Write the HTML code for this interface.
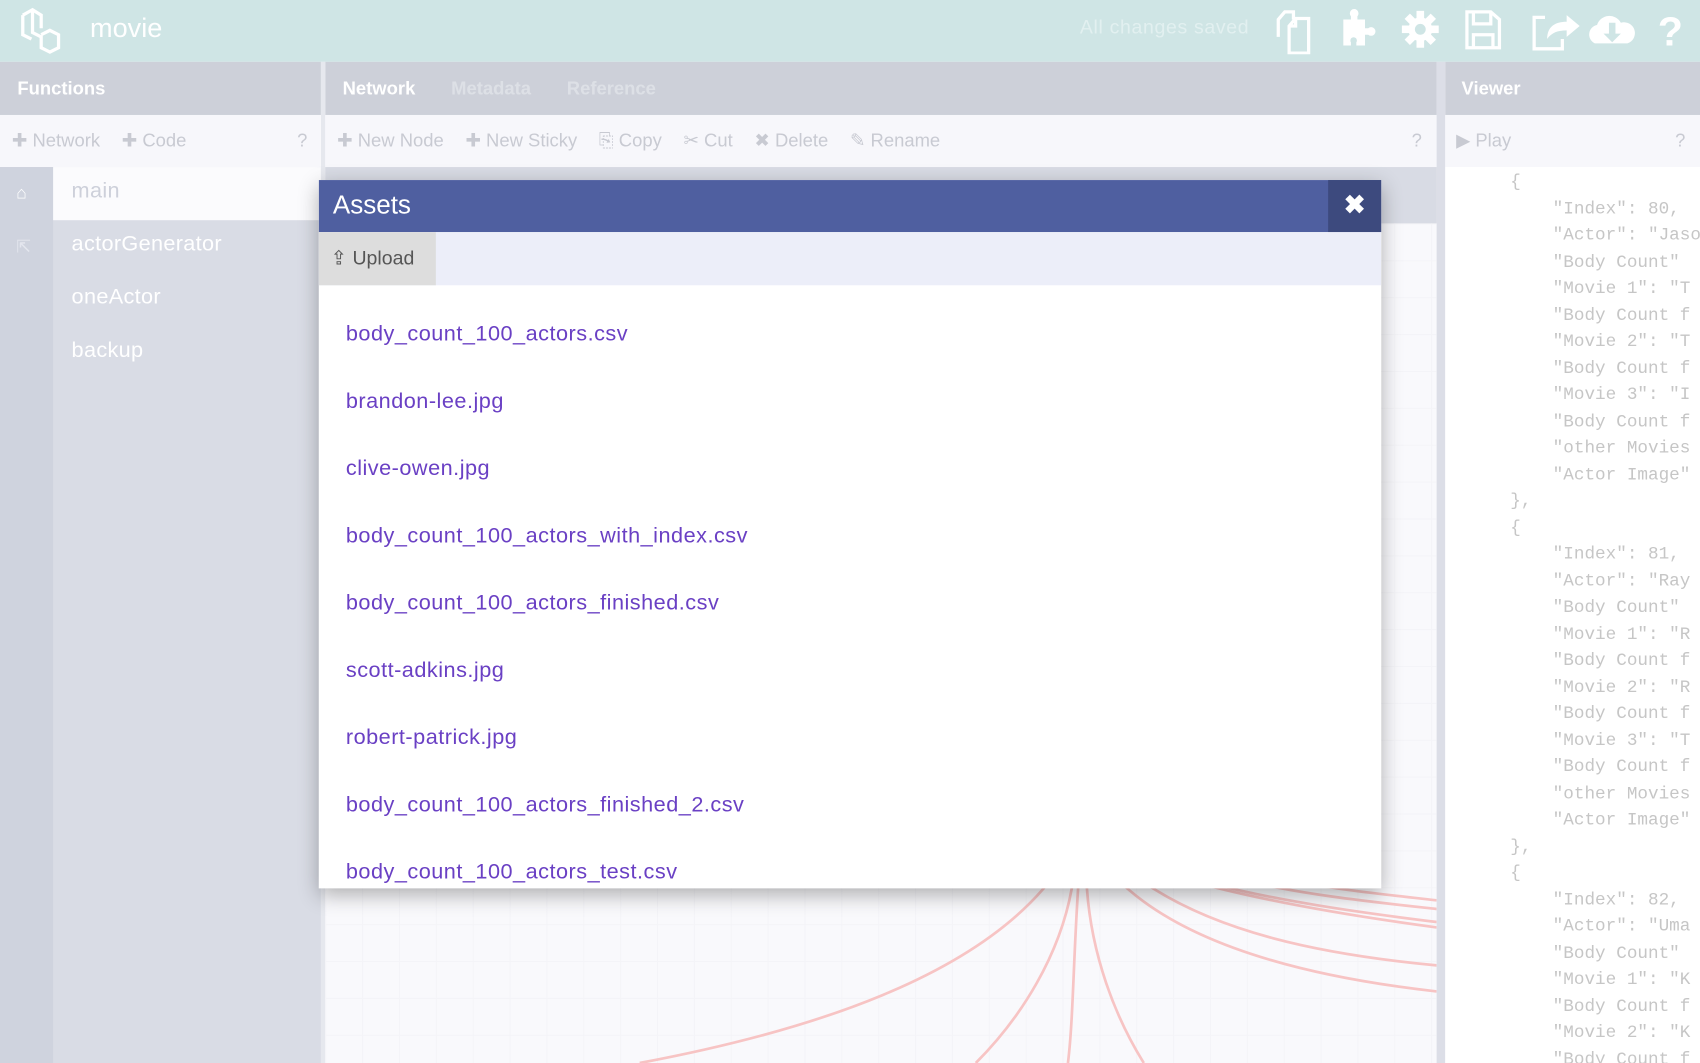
<!DOCTYPE html>
<html><head><meta charset="utf-8"><style>
*{margin:0;padding:0;box-sizing:border-box}
html,body{width:1700px;height:1063px;overflow:hidden;background:#f9f9fc}
#w{position:absolute;left:0;top:0;width:1568px;height:980px;transform:scale(1.0842,1.0847);transform-origin:0 0;font-family:"Liberation Sans",sans-serif;overflow:hidden}
.a{position:absolute}
.top{left:0;top:0;width:1568px;height:57px;background:#cfe5e5}
.hd{top:57px;height:49px;background:#cdd0d9;color:#fff;font-weight:bold;font-size:17px;line-height:49px}
.tb{top:106px;height:48px;background:#f7f7fb;color:#c8cad2;font-size:17px;line-height:48px;white-space:nowrap}
.tb span{margin-right:20px}
.fl{color:#fff;font-size:20px;left:66px;letter-spacing:0.3px}
.js{font-family:"Liberation Mono",monospace;font-size:16.3px;color:#c6c6c6;white-space:pre;line-height:24.5px}
.li{left:319px;color:#6a40c4;font-size:20px;letter-spacing:0.45px}
</style></head><body><div id="w">
<div class="a top"></div>
<svg class="a" style="left:16px;top:6px" width="42" height="44" viewBox="0 0 42 44" fill="none" stroke="#fff" stroke-width="3"><path d="M5 8 L14 3 L22 8 L22 20 M5 8 L5 26 L13 30 M14 3 L14 24 L22 28 L22 38 L30 42 L38 38 L38 26 L30 22 L22 26"/></svg>
<div class="a" style="left:83px;top:12px;color:#fff;font-size:25px">movie</div>
<div class="a" style="left:996px;top:15px;color:#e2f0f0;font-size:18px;letter-spacing:0.6px">All changes saved</div>
<svg class="a" style="left:1175px;top:6px" width="385" height="44" viewBox="0 0 385 44" fill="#fff">
<g fill="none" stroke="#fff" stroke-width="3"><path d="M4 28 V12 L10 5 H18 V12 M14 18 L20 11 H32 V43 H14 Z M20 11 V18 H14"/></g>
<path d="M64 12 h7 v-3 a4 4 0 1 1 6 0 v3 h7 v8 h3 a4 4 0 1 1 0 6 h-3 v10 h-8 v-3 a3 3 0 1 0 -5 0 v3 h-7 z"/>
<g transform="translate(135 21)"><circle r="11"/><g fill="#fff"><rect x="-3.5" y="-17" width="7" height="34"/><rect x="-17" y="-3.5" width="34" height="7"/><rect x="-3.5" y="-17" width="7" height="34" transform="rotate(45)"/><rect x="-3.5" y="-17" width="7" height="34" transform="rotate(-45)"/></g><circle r="5" fill="#cfe5e5"/></g>
<g fill="none" stroke="#fff" stroke-width="3"><path d="M178 5 H200 L208 12 V38 H178 Z M184 5 V16 H200 V5 M184 38 V26 H202 V38"/><path d="M250 10 H240 V39 H266 V30"/></g>
<path d="M252 30 C252 18 260 14 270 14 V8 L282 18 L270 28 V22 C262 22 256 24 252 30 Z"/>
<path d="M296 34 a9 9 0 0 1 2 -17 a12 12 0 0 1 22 -2 a9 9 0 0 1 6 19 z"/><path d="M309 15 h6 v10 h5 l-8 8 l-8 -8 h5 z" fill="#cfe5e5"/>
<text x="354" y="36" font-size="38" font-weight="bold" font-family="Liberation Sans">?</text>
</svg>
<div class="a hd" style="left:0;width:296px;padding-left:16px">Functions</div>
<div class="a hd" style="left:300px;width:1025px;padding-left:16px">Network<span style="color:#dde0e6;margin-left:33px">Metadata</span><span style="color:#dde0e6;margin-left:33px">Reference</span></div>
<div class="a hd" style="left:1333px;width:235px;padding-left:15px">Viewer</div>
<div class="a" style="left:296px;top:57px;width:4px;height:923px;background:#e6e8ee"></div>
<div class="a" style="left:1325px;top:57px;width:8px;height:923px;background:#dcdee7"></div>
<div class="a tb" style="left:0;width:296px;padding-left:11px"><span>✚ Network</span><span>✚ Code</span><span style="position:absolute;left:274px">?</span></div>
<div class="a tb" style="left:300px;width:1025px;padding-left:11px"><span>✚ New Node</span><span>✚ New Sticky</span><span>⎘ Copy</span><span>✂ Cut</span><span>✖ Delete</span><span>✎ Rename</span><span style="position:absolute;left:1002px">?</span></div>
<div class="a tb" style="left:1333px;width:235px;padding-left:10px"><span>▶ Play</span><span style="position:absolute;left:212px">?</span></div>
<div class="a" style="left:0;top:154px;width:296px;height:826px;background:#d9dce5"></div>
<div class="a" style="left:0;top:154px;width:49px;height:826px;background:#cfd3de"></div>
<div class="a" style="left:49px;top:154px;width:247px;height:49px;background:#fbfbfd"></div>
<div class="a" style="left:15px;top:170px;color:#fff;font-size:16px">⌂</div>
<div class="a" style="left:15px;top:218px;color:#e4e6ee;font-size:16px">⇱</div>
<div class="a fl" style="top:165px;color:#cdd0da">main</div>
<div class="a fl" style="top:214px">actorGenerator</div>
<div class="a fl" style="top:263px">oneActor</div>
<div class="a fl" style="top:312px">backup</div>
<div class="a" style="left:300px;top:154px;width:1025px;height:52px;background:#d8dbe4"></div>
<div class="a" style="left:300px;top:206px;width:1025px;height:774px;background-color:#f9f9fc;background-image:linear-gradient(#f4f4f8 1px,transparent 1px),linear-gradient(90deg,#f4f4f8 1px,transparent 1px);background-size:34px 34px"></div>
<svg class="a" style="left:300px;top:780px" width="1025" height="200" fill="none" stroke="#f7c4c4" stroke-width="2.5">
<path d="M670 30 C600 120 450 170 290 200"/><path d="M690 30 C680 100 640 160 600 200"/><path d="M695 30 C690 100 690 160 685 200"/><path d="M702 30 C705 100 730 160 755 200"/>
<path d="M730 30 C790 90 900 120 1025 134"/><path d="M750 30 C820 80 920 100 1025 110"/><path d="M790 30 C860 50 950 65 1025 75"/><path d="M800 30 C870 50 960 62 1025 70"/><path d="M840 30 C900 45 970 52 1025 58"/><path d="M880 30 C930 40 980 45 1025 50"/></svg>
<div class="a" style="left:1333px;top:154px;width:235px;height:826px;background:#fff"></div>
<div class="a js" style="left:1393px;top:156px">{
    "Index": 80,
    "Actor": "Jason
    "Body Count"
    "Movie 1": "T
    "Body Count f
    "Movie 2": "T
    "Body Count f
    "Movie 3": "I
    "Body Count f
    "other Movies
    "Actor Image"
},
{
    "Index": 81,
    "Actor": "Ray
    "Body Count"
    "Movie 1": "R
    "Body Count f
    "Movie 2": "R
    "Body Count f
    "Movie 3": "T
    "Body Count f
    "other Movies
    "Actor Image"
},
{
    "Index": 82,
    "Actor": "Uma
    "Body Count"
    "Movie 1": "K
    "Body Count f
    "Movie 2": "K
    "Body Count f</div>
<div class="a" style="left:294px;top:166px;width:980px;height:653px;background:#fff;box-shadow:0 6px 18px rgba(0,0,0,.3);overflow:hidden">
<div class="a" style="left:0;top:0;width:980px;height:48px;background:#4f5fa0;color:#fff;font-size:24px;line-height:48px;padding-left:13px">Assets</div>
<div class="a" style="left:931px;top:0;width:49px;height:48px;background:#3d4a7e;color:#fff;font-size:24px;font-weight:bold;line-height:48px;text-align:center">✖</div>
<div class="a" style="left:0;top:48px;width:980px;height:49px;background:#eceef9"></div>
<div class="a" style="left:0;top:48px;width:108px;height:49px;background:#dddddd;color:#555;font-size:18px;line-height:49px;padding-left:11px">⇪ Upload</div>
</div>
<div class="a li" style="top:297px">body_count_100_actors.csv</div>
<div class="a li" style="top:359px">brandon-lee.jpg</div>
<div class="a li" style="top:421px">clive-owen.jpg</div>
<div class="a li" style="top:483px">body_count_100_actors_with_index.csv</div>
<div class="a li" style="top:545px">body_count_100_actors_finished.csv</div>
<div class="a li" style="top:607px">scott-adkins.jpg</div>
<div class="a li" style="top:669px">robert-patrick.jpg</div>
<div class="a li" style="top:731px">body_count_100_actors_finished_2.csv</div>
<div class="a li" style="top:793px">body_count_100_actors_test.csv</div>
</div></body></html>
